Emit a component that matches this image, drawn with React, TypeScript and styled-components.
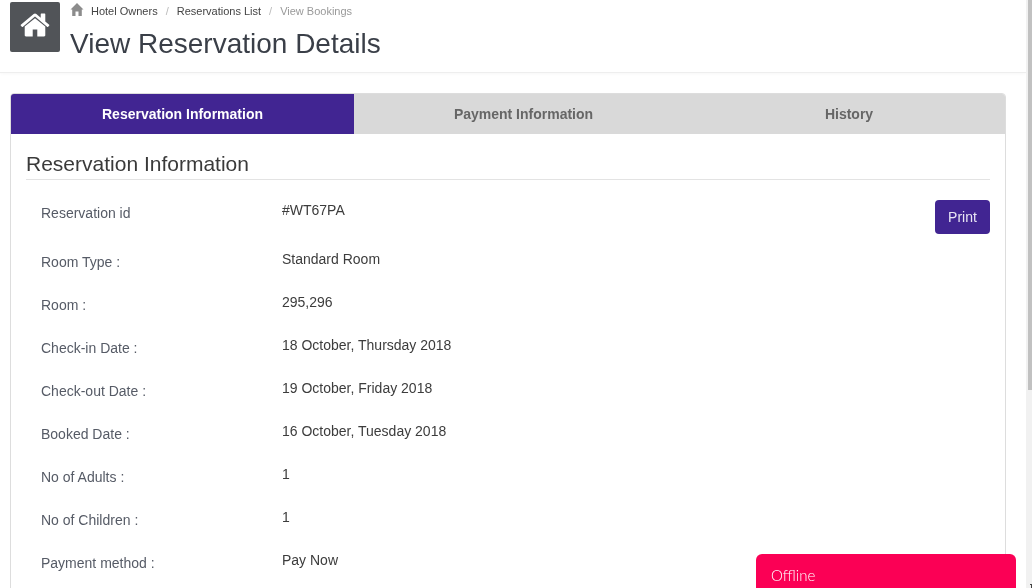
import React from "react";
import styled, { createGlobalStyle } from "styled-components";

const GlobalStyle = createGlobalStyle`
  html, body {
    margin: 0;
    padding: 0;
    height: 100%;
    overflow: hidden;
    background: #fff;
  }
  body {
    font-family: "Liberation Sans", Arial, sans-serif;
    font-size: 14px;
    color: #333;
  }
`;

const Page = styled.div`
  height: 588px;
  overflow: hidden;
  display: flex;
  will-change: transform;
`;

const Main = styled.div`
  width: 1026px;
  flex: none;
`;

const Rail = styled.div`
  position: relative;
  width: 6px;
  flex: none;
  background: #f1f1f1;
  display: flex;
  justify-content: flex-end;
`;

const Thumb = styled.div`
  width: 4px;
  height: 390px;
  background: #c1c1c1;
`;

const RailArrow = styled.svg`
  position: absolute;
  right: 0;
  bottom: 0;
`;

const Header = styled.header`
  height: 70px;
  border-bottom: 1px solid #eee;
  box-shadow: 0 1px 3px rgba(0, 0, 0, 0.03);
  padding: 2px 0 0 10px;
  display: flex;
  gap: 10px;
`;

const HomeTile = styled.div`
  width: 50px;
  height: 50px;
  box-sizing: border-box;
  padding-bottom: 5px;
  background: #515458;
  border-radius: 2px;
  display: flex;
  align-items: center;
  justify-content: center;
`;

const TitleBlock = styled.div`
  display: flex;
  flex-direction: column;
`;

const Crumbs = styled.nav`
  display: flex;
  align-items: center;
  height: 18px;
  font-size: 11px;
`;

const CrumbIcon = styled.svg`
  margin: -3px 7px 0 0;
`;

const Crumb = styled.span<{ $muted?: boolean }>`
  color: ${(p) => (p.$muted ? "#999" : "#444")};
`;

const Sep = styled.span`
  color: #bbb;
  margin: 0 8px;
`;

const PageTitle = styled.h1`
  margin: 6px 0 0;
  font-size: 28px;
  line-height: 36px;
  font-weight: 400;
  color: #3a3f48;
`;

const Content = styled.main`
  padding: 20px 20px 0 10px;
`;

const Panel = styled.section`
  border: 1px solid #ddd;
  border-radius: 4px;
  overflow: hidden;
`;

const Tabs = styled.div`
  display: flex;
  height: 40px;
  background: #d9d9d9;
`;

const Tab = styled.div<{ $active?: boolean; $w: number }>`
  width: ${(p) => p.$w}px;
  display: flex;
  align-items: center;
  justify-content: center;
  font-size: 14px;
  font-weight: 700;
  background: ${(p) => (p.$active ? "#412592" : "transparent")};
  color: ${(p) => (p.$active ? "#fff" : "#666")};
`;

const Body = styled.div`
  padding: 0 15px 40px;
`;

const SectionTitle = styled.h2`
  margin: 0;
  padding: 17px 0 2px;
  font-size: 21px;
  line-height: 26px;
  font-weight: 400;
  color: #3a3a3a;
  border-bottom: 1px solid #e3e3e3;
`;

const Row = styled.div<{ $first?: boolean }>`
  height: ${(p) => (p.$first ? 63 : 43)}px;
  display: flex;
`;

const Label = styled.div<{ $first?: boolean }>`
  width: 241px;
  padding: ${(p) => (p.$first ? 25 : 11)}px 0 0 15px;
  color: #565b66;
  line-height: 16px;
`;

const Value = styled.div<{ $first?: boolean }>`
  padding-top: ${(p) => (p.$first ? 22 : 8)}px;
  line-height: 16px;
  color: #3c3c3c;
`;

const PrintButton = styled.button`
  margin-left: auto;
  margin-top: 20px;
  height: 34px;
  width: 55px;
  padding: 0;
  border: none;
  border-radius: 4px;
  background: #412592;
  color: #e9e6f4;
  font: 14px "Liberation Sans", Arial, sans-serif;
`;

const ChatBar = styled.div`
  position: fixed;
  left: 756px;
  top: 554px;
  width: 260px;
  height: 60px;
  box-sizing: border-box;
  padding: 12px 15px;
  background: #fb0055;
  border-radius: 6px 6px 0 0;
  color: #fff;
  font: 300 15px/18px Lato, sans-serif;
`;

const rows = [
  { label: "Room Type :", value: "Standard Room" },
  { label: "Room :", value: "295,296" },
  { label: "Check-in Date :", value: "18 October, Thursday 2018" },
  { label: "Check-out Date :", value: "19 October, Friday 2018" },
  { label: "Booked Date :", value: "16 October, Tuesday 2018" },
  { label: "No of Adults :", value: "1" },
  { label: "No of Children :", value: "1" },
  { label: "Payment method :", value: "Pay Now" },
];

const TileHouse = () => (
  <svg width={32} height={32} viewBox="0 0 1792 1792" fill="#fff">
    <path d="M1472 992v480q0 26-19 45t-45 19h-384v-384h-256v384h-384q-26 0-45-19t-19-45v-480q0-1 .5-3t.5-3l575-474 575 474q1 2 1 6zm223-69l-62 74q-8 9-21 11h-3q-13 0-21-7l-692-577-692 577q-12 8-24 7-13-2-21-11l-62-74q-8-10-7-23.500t11-21.500l719-599q32-26 76-26t76 26l244 204v-195q0-14 9-23t23-9h192q14 0 23 9t9 23v408l219 182q10 8 11 21.500t-7 23.500z" />
  </svg>
);

export default function App() {
  return (
    <Page>
      <GlobalStyle />
      <Main>
        <Header>
          <HomeTile>
            <TileHouse />
          </HomeTile>
          <TitleBlock>
            <Crumbs>
              <CrumbIcon width={14} height={13} viewBox="0 0 14 13" fill="#8c8c8c">
                <path d="M7 0 L13.500 6.500 H11.800 V13 H8.500 V8.500 H5.500 V13 H2.200 V6.500 H0.500 Z" />
              </CrumbIcon>
              <Crumb>Hotel Owners</Crumb>
              <Sep>/</Sep>
              <Crumb>Reservations List</Crumb>
              <Sep>/</Sep>
              <Crumb $muted>View Bookings</Crumb>
            </Crumbs>
            <PageTitle>View Reservation Details</PageTitle>
          </TitleBlock>
        </Header>
        <Content>
          <Panel>
            <Tabs>
              <Tab $active $w={343}>Reservation Information</Tab>
              <Tab $w={339}>Payment Information</Tab>
              <Tab $w={312}>History</Tab>
            </Tabs>
            <Body>
              <SectionTitle>Reservation Information</SectionTitle>
              <Row $first>
                <Label $first>Reservation id</Label>
                <Value $first>#WT67PA</Value>
                <PrintButton>Print</PrintButton>
              </Row>
              {rows.map((r) => (
                <Row key={r.label}>
                  <Label>{r.label}</Label>
                  <Value>{r.value}</Value>
                </Row>
              ))}
            </Body>
          </Panel>
        </Content>
      </Main>
      <Rail>
        <Thumb />
        <RailArrow width={2} height={4} viewBox="0 0 2 4" fill="#444">
          <path d="M0 0 H2 V4 H1 V1 H0 Z" />
        </RailArrow>
      </Rail>
      <ChatBar>Offline</ChatBar>
    </Page>
  );
}
